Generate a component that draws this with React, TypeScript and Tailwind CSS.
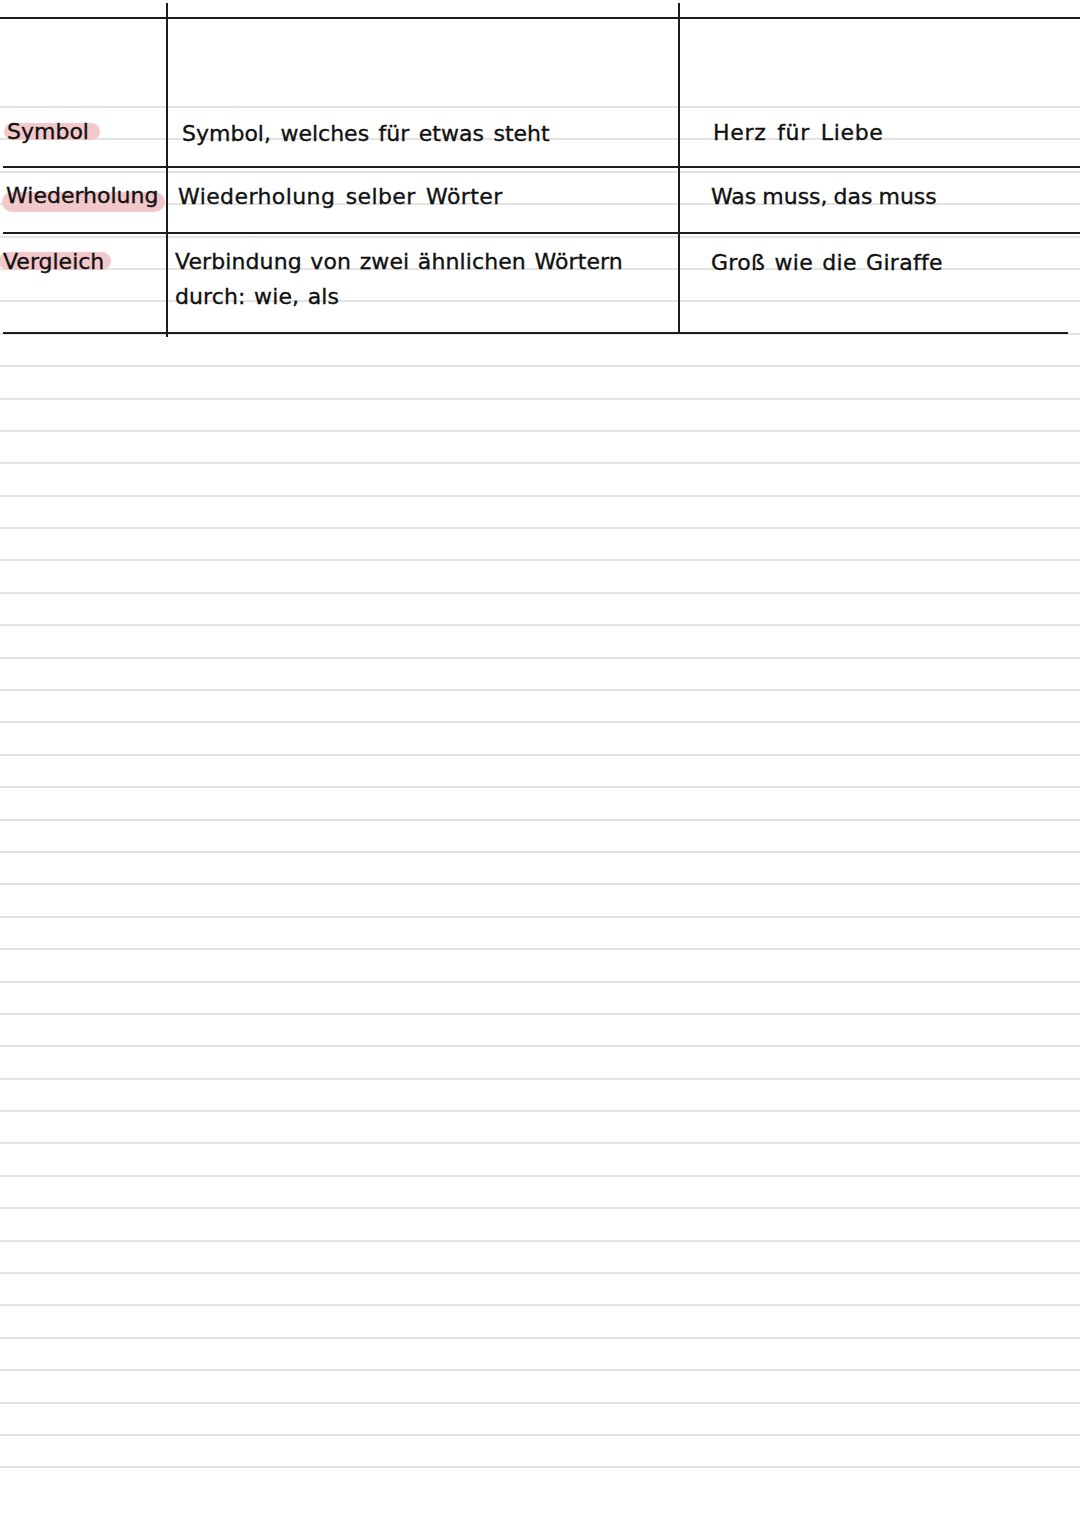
import type { ReactNode } from "react";

const line = "border-[#1c1c1c]";

function Mark({ children, className }: { children: ReactNode; className: string }) {
  return (
    <span className="relative inline-block">
      <span className={`absolute rounded-full bg-[#f3c8cb] ${className}`} />
      <span className="relative">{children}</span>
    </span>
  );
}

export default function App() {
  return (
    <div className="h-[1527px] w-[1080px] overflow-hidden bg-white bg-[repeating-linear-gradient(to_bottom,#e3e3e3_0px,#e3e3e3_2px,transparent_2px,transparent_32.39px)] bg-[length:100%_1363px] bg-[position:0_105.7px] bg-no-repeat pt-[3px] font-['DejaVu_Sans',sans-serif] text-[22px] leading-[32px] text-[#111] [-webkit-text-stroke:0.35px_#111]">
      {/* table */}
      <div className="grid grid-cols-[166px_512px_1fr]">
        {/* cropped header stub */}
        <div className="h-[14px]" />
        <div className={`h-[14px] border-l-2 ${line}`} />
        <div className={`h-[14px] border-l-2 ${line}`} />

        {/* Symbol */}
        <div className={`h-[149px] border-t-2 ${line} pl-[7px] pt-[97px]`}>
          <Mark className="-left-[3px] top-[7px] h-[17px] w-[96px]">Symbol</Mark>
        </div>
        <div className={`h-[149px] border-l-2 border-t-2 ${line} pl-[14px] pt-[99px] [word-spacing:2.5px]`}>
          Symbol, welches für etwas steht
        </div>
        <div className={`h-[149px] border-l-2 border-t-2 ${line} pl-[33px] pt-[98px] tracking-[0.7px] [word-spacing:3px]`}>
          Herz für Liebe
        </div>

        {/* Wiederholung */}
        <div className={`ml-[3px] h-[66px] border-t-2 ${line} pl-[3px] pt-[12px]`}>
          <Mark className="-left-[4px] top-[12px] h-[20px] w-[163px]">Wiederholung</Mark>
        </div>
        <div className={`h-[66px] border-l-2 border-t-2 ${line} pl-[10px] pt-[13px] tracking-[0.4px] [word-spacing:3px]`}>
          Wiederholung selber Wörter
        </div>
        <div className={`h-[66px] border-l-2 border-t-2 ${line} pl-[31px] pt-[13px] [word-spacing:-1px]`}>
          Was muss, das muss
        </div>

        {/* Vergleich */}
        <div className={`ml-[3px] h-[100px] border-t-2 ${line} pl-0 pt-[12px]`}>
          <Mark className="-left-[4px] top-[6px] h-[18px] w-[112px]">Vergleich</Mark>
        </div>
        <div className={`h-[100px] border-l-2 border-t-2 ${line} pl-[7px] pt-[12px] leading-[35px] tracking-[0.1px] [word-spacing:1.5px]`}>
          <div className="-mt-[2px]">Verbindung von zwei ähnlichen Wörtern</div>
          <div>durch: wie, als</div>
        </div>
        <div className={`h-[100px] border-l-2 border-t-2 ${line} pl-[31px] pt-[13px] tracking-[0.3px] [word-spacing:2px]`}>
          Groß wie die Giraffe
        </div>
      </div>
      <div className="ml-[3px] h-[2px] w-[1065px] bg-[#1c1c1c]" />
      <div className="ml-[166px] h-[3px] w-[2px] bg-[#1c1c1c]" />
    </div>
  );
}
